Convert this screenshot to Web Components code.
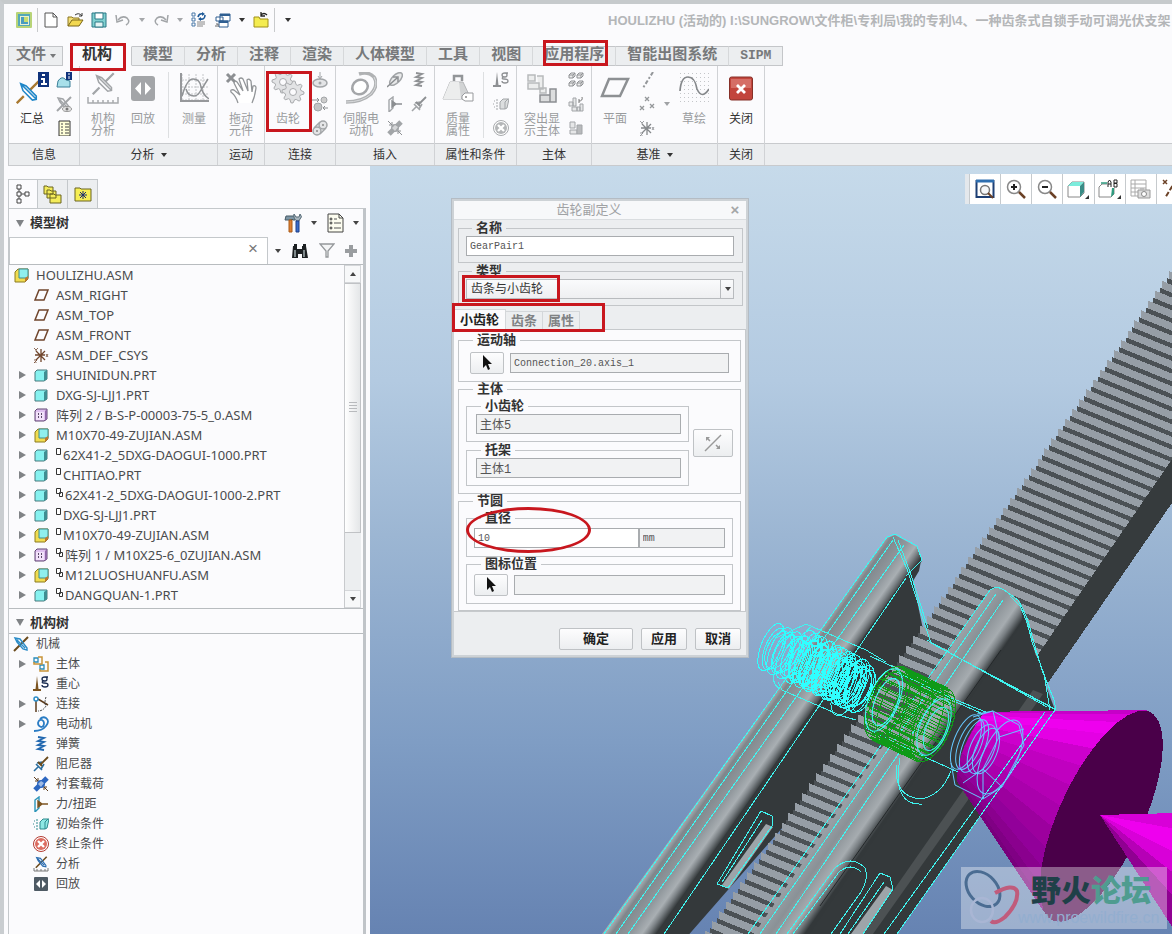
<!DOCTYPE html>
<html lang="zh-CN">
<head>
<meta charset="utf-8">
<title>HOULIZHU</title>
<style>
  html, body { height: 100%; margin: 0; }
  body {
    font: 12px/16px "Liberation Sans", "Noto Sans CJK SC", sans-serif;
    color: #444;
    background: #fbfbfd;
    overflow: hidden;
  }
</style>
</head>
<body>
<cad-window>
  <quick-bar slot="title">HOULIZHU (活动的) I:\SUNGROW\文件柜\专利局\我的专利\4、一种齿条式自锁手动可调光伏支架</quick-bar>

  <ribbon-tabs slot="tabs">
    <ribbon-tab menu>文件</ribbon-tab>
    <ribbon-tab active marked style="--mark: -3px 6px -5px 7px">机构</ribbon-tab>
    <ribbon-tab>模型</ribbon-tab>
    <ribbon-tab>分析</ribbon-tab>
    <ribbon-tab>注释</ribbon-tab>
    <ribbon-tab>渲染</ribbon-tab>
    <ribbon-tab>人体模型</ribbon-tab>
    <ribbon-tab>工具</ribbon-tab>
    <ribbon-tab>视图</ribbon-tab>
    <ribbon-tab marked style="--mark: -6px 8px 0 10px">应用程序</ribbon-tab>
    <ribbon-tab>智能出图系统</ribbon-tab>
    <ribbon-tab>SIPM</ribbon-tab>
  </ribbon-tabs>

  <ribbon-bar slot="ribbon">
    <ribbon-group label="信息">
      <ribbon-button icon="summary">汇总</ribbon-button>
      <icon-column icons="massinfo hidejoint list"></icon-column>
    </ribbon-group>
    <ribbon-group label="分析" menu>
      <ribbon-button icon="mechanalysis" off>机构<br>分析</ribbon-button>
      <ribbon-button icon="playback" off>回放</ribbon-button>
      <ribbon-sep></ribbon-sep>
      <ribbon-button icon="measure" off>测量</ribbon-button>
    </ribbon-group>
    <ribbon-group label="运动">
      <ribbon-button icon="drag" off>拖动<br>元件</ribbon-button>
    </ribbon-group>
    <ribbon-group label="连接">
      <ribbon-button icon="gears" off marked>齿轮</ribbon-button>
      <icon-column icons="cam contact belt"></icon-column>
    </ribbon-group>
    <ribbon-group label="插入">
      <ribbon-button icon="motor" off wide>伺服电<br>动机</ribbon-button>
      <icon-column icons="forcemotor forceg bushingg"></icon-column>
      <icon-column icons="springg damperg"></icon-column>
    </ribbon-group>
    <ribbon-group label="属性和条件">
      <ribbon-button icon="mass" off>质量<br>属性</ribbon-button>
      <ribbon-sep></ribbon-sep>
      <icon-column icons="gravityg initialg stopg"></icon-column>
    </ribbon-group>
    <ribbon-group label="主体">
      <ribbon-button icon="bodies" off wide>突出显<br>示主体</ribbon-button>
      <icon-column icons="cubes rebody shade"></icon-column>
    </ribbon-group>
    <ribbon-group label="基准" menu>
      <ribbon-button icon="plane" off>平面</ribbon-button>
      <icon-column icons="axis points csysg"></icon-column>
      <ribbon-caret></ribbon-caret>
      <ribbon-button icon="sketch" off>草绘</ribbon-button>
    </ribbon-group>
    <ribbon-group label="关闭">
      <ribbon-button icon="close">关闭</ribbon-button>
    </ribbon-group>
  </ribbon-bar>

  <side-panel slot="side">
    <tree-view slot="model" label="模型树" style="--tree-size: 13px">
      <tree-item root icon="asm">HOULIZHU.ASM</tree-item>
      <tree-item icon="planei">ASM_RIGHT</tree-item>
      <tree-item icon="planei">ASM_TOP</tree-item>
      <tree-item icon="planei">ASM_FRONT</tree-item>
      <tree-item icon="csys">ASM_DEF_CSYS</tree-item>
      <tree-item open icon="part">SHUINIDUN.PRT</tree-item>
      <tree-item open icon="part">DXG-SJ-LJJ1.PRT</tree-item>
      <tree-item open icon="pattern">阵列 2 / B-S-P-00003-75-5_0.ASM</tree-item>
      <tree-item open icon="asm">M10X70-49-ZUJIAN.ASM</tree-item>
      <tree-item open icon="part" flag="one">62X41-2_5DXG-DAOGUI-1000.PRT</tree-item>
      <tree-item open icon="part" flag="one">CHITIAO.PRT</tree-item>
      <tree-item open icon="part" flag="two">62X41-2_5DXG-DAOGUI-1000-2.PRT</tree-item>
      <tree-item open icon="part" flag="one">DXG-SJ-LJJ1.PRT</tree-item>
      <tree-item open icon="asm" flag="one">M10X70-49-ZUJIAN.ASM</tree-item>
      <tree-item open icon="pattern" flag="two">阵列 1 / M10X25-6_0ZUJIAN.ASM</tree-item>
      <tree-item open icon="asm" flag="two">M12LUOSHUANFU.ASM</tree-item>
      <tree-item open icon="part" flag="two">DANGQUAN-1.PRT</tree-item>
    </tree-view>
    <tree-view slot="mechanism" label="机构树">
      <tree-item root icon="mech">机械</tree-item>
      <tree-item open icon="body">主体</tree-item>
      <tree-item icon="gravity">重心</tree-item>
      <tree-item open icon="joint">连接</tree-item>
      <tree-item open icon="motori">电动机</tree-item>
      <tree-item icon="spring">弹簧</tree-item>
      <tree-item icon="damper">阻尼器</tree-item>
      <tree-item icon="bushing">衬套载荷</tree-item>
      <tree-item icon="force">力/扭距</tree-item>
      <tree-item icon="initial">初始条件</tree-item>
      <tree-item icon="stop">终止条件</tree-item>
      <tree-item icon="analysisi">分析</tree-item>
      <tree-item icon="playi">回放</tree-item>
    </tree-view>
  </side-panel>

  <graphics-area slot="main">
    <view-toolbar slot="toolbar"></view-toolbar>
    <gear-dialog slot="dialog"></gear-dialog>
    <forum-stamp slot="stamp"></forum-stamp>
  </graphics-area>
</cad-window>

<script>
// ---------- icons: name -> [width, height, svg markup] ----------
const G = '#a2a5a8';

const crossBar = (c1, c2) => `<path d="M1 31L10 22M18 14L29 3" stroke="${c1}" stroke-width="3"/><path d="M6 6l20 20M6 6l3 9 12 12 5-1 0-4L13 9z" fill="none" stroke="${c2}" stroke-width="2"/>`;
const miniCross = (c1, c2) => `<path d="M1 15L15 1" stroke="${c1}" stroke-width="2"/><path d="M2 2l5 1 7 9 0 2-4-1-6-7zM4 4l8 8" fill="none" stroke="${c2}" stroke-width="1.4"/>`;
const spring = c => `<path d="M5 1l6 1-6 3 6 1-6 3 6 1-6 3 6 1" fill="none" stroke="${c}" stroke-width="1.8"/>`;
const damper = (a, b) => `<path d="M1 15l4-4M3 8l6 6M4 7l5-1M8 13l3-5" stroke="${a}" stroke-width="1.6" fill="none"/><path d="M7 9l8-8M5 6l4 4" stroke="${b}" stroke-width="1.8"/>`;
const bushing = (a, b) => `<path d="M2 14L14 2" stroke="${a}" stroke-width="5"/><circle cx="8" cy="8" r="4" fill="${a}"/><path d="M5 8l3-3 3 2-3 4z" fill="#fff" opacity=".55"/><path d="M1 1l4 4M2 5h3V2M15 15l-4-4M11 14v-3h3" stroke="${b}" fill="none"/>`;
const force = (a, b) => `<path d="M2 4l4-3v11l-4 4z" fill="none" stroke="${a}" stroke-width="1.4"/><path d="M5 8h10M5 5l4 3-4 3z" stroke="${b}" stroke-width="1.4" fill="${b}"/>`;
const initial = (a, f) => `<path d="M7 6l3-3h6l-2 9-2 1H7z" fill="${f}" stroke="${a}"/><path d="M12 6v7M12 6l3-3" stroke="${a}"/><path d="M1 5h1M3 4h2M0 8h1M3 7h2M1 11h1M3 10h2M3 13h2" stroke="${a}"/>`;
const stop = (a, b) => `<circle cx="8" cy="8" r="7.5" fill="#fff" stroke="${a}"/><circle cx="8" cy="8" r="6" fill="${b}"/><path d="M5 5l6 6M11 5l-6 6" stroke="#fff" stroke-width="2.4"/>`;
const gravity = (a, b) => `<path d="M4 0l1.5 13h-3z" fill="${a}"/><path d="M0 14h8" stroke="${a}" stroke-width="2"/><path d="M15 1h-3M12 1q-3 0-3 2t3 2q2 0 2-2t-2-2M10 5q-2 2 1 2 4 0 4 2t-3 2q-3 0-3-2" fill="none" stroke="${b}" stroke-width="1.3"/>`;
const bodies = (a, b) => `<path d="M1 2h4v4H1zM7 9h4v4H7z" fill="none" stroke="${b}" stroke-width="1.3"/><path d="M5 1h4v7H1V6M12 6h3v9H7v-2" fill="none" stroke="${a}" stroke-width="1.5"/>`;
const swirl = (c, w) => `<path d="M1 15q8 0 12-5 4-5 0-8Q10 0 7 3M11 7q0 4-3 4-3-1-3-4 1-4 4-3 2 1 2 3z" fill="none" stroke="${c}" stroke-width="${w}"/>`;
const csys = c => `<path d="M8 2v13M2 8h10M3 4l9 9M3 13l9-9" stroke="${c}" stroke-width="1.3"/><path d="M1 1l2 2 2-2M3 3v1M13 7l2 3M15 7l-2 3M1 13h3l-3 3h3" stroke="${c}" stroke-width=".8" fill="none"/>`;

const gear = (cx, cy, r) => {
  let d = '';
  for (let i = 0; i < 32; i++) {
    const rr = i % 4 < 2 ? r : r - 3;
    const a = i * Math.PI / 16;
    d += `${i ? 'L' : 'M'}${(cx + rr * Math.cos(a)).toFixed(1)} ${(cy + rr * Math.sin(a)).toFixed(1)}`;
  }
  return `<path d="${d}z" fill="#e2e3e5" stroke="#a9abae"/><circle cx="${cx}" cy="${cy}" r="3.5" fill="#fbfbfd" stroke="#a9abae"/>`;
};
const grid = (n, s) => Array.from({ length: n * n }, (_, i) => `<rect x="${(i % n) * s + 1}" y="${Math.floor(i / n) * s + 1}" width="1" height="1" fill="#c4c6c9"/>`).join('');

const ICONS = {
  // quick access
  app: [16, 16, `<rect width="16" height="16" rx="1" fill="#b8d478"/><path d="M2 2h12v12H2z" fill="#55a8b8"/><path d="M4 4h9v9H4z" fill="#e8f0d0"/><path d="M5 5h7v7H5z" fill="#4a9cc0"/><path d="M8 5h4v5H8z" fill="#c8de70"/>`],
  new: [14, 16, `<path d="M1 1h8l4 4v10H1z" fill="#fff" stroke="#555"/><path d="M9 1v4h4" fill="none" stroke="#555"/>`],
  open: [17, 16, `<path d="M1 14V5h4l1 1h6v3" fill="#f4e078" stroke="#8a7420"/><path d="M1 14l4-6h11l-4 6z" fill="#f2d850" stroke="#7a6618"/><path d="M8 3q4-3 7 1M15 1v3h-3" fill="none" stroke="#333"/>`],
  save: [16, 16, `<path d="M1 1h14v14H1z" fill="#7fd0d0" stroke="#2d7886"/><path d="M4 1h8v6H4z" fill="#fff" stroke="#2d7886"/><path d="M4 10h8v5H4z" fill="#e4f4f4" stroke="#2d7886"/>`],
  undo: [16, 12, `<path d="M3 6q4-5 9-2 4 4-1 7" fill="none" stroke="${G}" stroke-width="1.5"/><path d="M1 1l1 7 6-2" fill="none" stroke="${G}" stroke-width="1.5"/>`],
  redo: [16, 12, `<path d="M13 6Q9 1 4 4q-4 4 1 7" fill="none" stroke="${G}" stroke-width="1.5"/><path d="M15 1l-1 7-6-2" fill="none" stroke="${G}" stroke-width="1.5"/>`],
  regen: [16, 16, `<path d="M1 1h3v3H1zM1 6h3v3H1zM1 11h3v3H1z" fill="none" stroke="#4878a8"/><path d="M6 10h8M6 12h8M6 14h6" stroke="#888"/><path d="M7 5q1-4 5-3M14 3q0 5-5 4" fill="none" stroke="#1e5a98" stroke-width="1.6"/><path d="M11 0l3 2-3 2zM10 5L7 7l3 2z" fill="#1e5a98"/>`],
  windows: [16, 15, `<path d="M5 1h10v7H5zM1 4h7v4H1zM4 8h9v6H4z" fill="#fff" stroke="#2f5f92"/><path d="M5 1h10v2H5zM4 8h9v2H4z" fill="#2f5f92"/><path d="M1 11h2v3M1 12v2" stroke="#666" fill="none"/>`],
  winclose: [16, 16, `<path d="M1 15V5h5l1 2h8v8z" fill="#f4ec50" stroke="#a09018"/><path d="M8 3q3-3 6 0M8 0v4h4" fill="none" stroke="#222" stroke-width="1.3"/>`],

  // ribbon
  summary: [33, 32, `<g transform="translate(0,7) scale(.78)">${crossBar('#a87830', '#1f86c8')}</g><rect x="22" width="11" height="15" fill="#10337c"/><path d="M26 3h3M25 7h3v5M25 12h6" stroke="#fff" stroke-width="2" fill="none"/>`],
  massinfo: [16, 16, `<path d="M1 15l1-6q4-6 8-1l4 1v6z" fill="#a8e0ea" stroke="#3a7f98"/><rect x="10" y="0" width="6" height="8" fill="#10337c"/><path d="M12 2h2M13 4v3" stroke="#fff"/>`],
  hidejoint: [16, 16, `${miniCross(G, G)}<ellipse cx="11" cy="13" rx="4.5" ry="2.5" fill="#e4e4e4" stroke="#999"/><circle cx="11" cy="13" r="1.5" fill="#777"/>`],
  list: [13, 16, `<path d="M1 1h11v15H1z" fill="#ffffd8" stroke="#333"/><path d="M3 4h2M3 7h2M3 10h2M3 13h2M7 4h4M7 7h4M7 10h4M7 13h4" stroke="#444"/>`],
  mechanalysis: [32, 32, `<g transform="translate(5,-1) scale(.75)">${crossBar(G, G)}</g><path d="M1 25v6h30v-6M6 28v3M11 28v3M16 28v3M21 28v3M26 28v3" fill="none" stroke="#a8aaad" stroke-width="1.5"/>`],
  playback: [26, 32, `<rect x="1" y="4" width="24" height="25" rx="3" fill="#a3a5a8"/><path d="M11 10v13l-6-6.500zM15 10v13l6-6.500z" fill="#fff"/>`],
  measure: [30, 32, `<path d="M3 2v26M3 28h27M3 8h27M3 15h27M3 22h27M10 2v26M17 2v26M24 2v26" stroke="#c4c6c9" stroke-dasharray="2 1"/><path d="M3 24Q8 7 14 7q7 0 8 8 2 8 8 12M7 17q2 7 8 7 4 0 7-6l7-11" fill="none" stroke="#909396" stroke-width="1.5"/><path d="M2 1v28h28" fill="none" stroke="#96989b" stroke-width="2"/>`],
  drag: [32, 32, `<path d="M2 2l8 8M10 2l-8 8" stroke="#8c8f92" stroke-width="3"/><path d="M13 31q-2-7-7-11-1-3 3-2l6 5L9 11q1-3 3-1l6 9-4-12q2-2 4 0l5 12-1-11q2-2 4 1l1 11 1-6q3-1 3 2-1 8-4 15" fill="#fff" stroke="#929598" stroke-width="1.3"/>`],
  gears: [34, 32, `${gear(12, 10, 11)}${gear(22, 20, 11)}`],
  cam: [16, 16, `<path d="M8 0v6M6 4l2 3 2-3" stroke="${G}" fill="none"/><ellipse cx="8" cy="11" rx="7" ry="4" fill="#e3e4e6" stroke="${G}" stroke-width="1.5"/><circle cx="8" cy="11" r="1.5" fill="${G}"/>`],
  contact: [16, 16, `<circle cx="12" cy="4" r="3" fill="#ccc" stroke="${G}"/><circle cx="6" cy="11" r="4" fill="#c2c4c6" stroke="${G}"/><path d="M0 4h7M5 2l2 2-2 2M16 12h-5M13 10l-2 2 2 2" stroke="#8c8f92" fill="none"/>`],
  belt: [16, 16, `<circle cx="11" cy="5" r="4" fill="#e4e5e7" stroke="${G}" stroke-width="1.5"/><circle cx="5" cy="11" r="4" fill="#e4e5e7" stroke="${G}" stroke-width="1.5"/><path d="M8 2L2 8M14 8l-6 6" stroke="${G}" stroke-width="1.5"/><circle cx="11" cy="5" r="1" fill="#888"/><circle cx="5" cy="11" r="1" fill="#888"/>`],
  motor: [32, 32, `<path d="M1 30q16 0 25-8 8-9 3-17-6-6-15-3" fill="none" stroke="#b0b2b4" stroke-width="3.500"/><path d="M1 30q16 0 25-8 8-9 3-17" fill="none" stroke="#d8dadc" stroke-width="1"/><ellipse cx="15" cy="15" rx="8" ry="7" transform="rotate(-30 15 15)" fill="#fff" stroke="#a4a6a9" stroke-width="2.500"/>`],
  forcemotor: [16, 16, `<ellipse cx="9" cy="7" rx="8" ry="4" transform="rotate(-45 9 7)" fill="#e8e9ea" stroke="${G}" stroke-width="1.5"/><path d="M0 15L10 6M6 5h5v5" stroke="#8c8f92" fill="none" stroke-width="1.5"/>`],
  springg: [16, 16, spring('#8f9194')],
  forceg: [16, 16, force(G, '#8c8f92')],
  damperg: [16, 16, damper(G, '#8c8f92')],
  bushingg: [16, 16, bushing(G, '#8c8f92')],
  mass: [32, 32, `<path d="M1 27l7-17h13l8 17z" fill="#d2d4d5" stroke="#b4b6b8"/><path d="M8 10l-7 17h18l-2-17z" fill="#eceded"/><path d="M12 9V4h8v5" fill="none" stroke="#929598" stroke-width="2.5"/><path d="M20 24l3-3h8v8h-8l-3-2z" fill="#fff" stroke="#97999c"/><circle cx="24" cy="25" r="1" fill="#888"/>`],
  gravityg: [16, 16, gravity('#8f9194', '#8f9194')],
  initialg: [16, 16, initial(G, '#dcdedf')],
  stopg: [17, 17, stop('#a8aaad', '#b4b6b8')],
  bodies: [30, 32, `<path d="M1 3h7v6H1zM1 11h11v6H1zM10 4h6v13h-4M13 16h6v5h-6z" fill="#eceded" stroke="#b8babc" stroke-width="1.5"/><path d="M13 23h10v7H13zM23 17h6v13h-6z" fill="#dcddde" stroke="#8c8f92" stroke-width="1.5"/>`],
  cubes: [16, 16, [[1, 3], [9, 3], [1, 11], [9, 11]].map(([x, y]) => `<path d="M${x} ${y}l2-2h4v3l-2 2h-4zM${x} ${y}h4v3M${x + 4} ${y}l2-2" fill="#eee" stroke="#8f9194"/>`).join('')],
  rebody: [16, 16, `<path d="M1 6h4v4H1zM5 2h3v8H5zM4 11h5v4H4zM9 11h3v4H9zM12 8h3v7h-3z" fill="#e6e7e8" stroke="${G}"/><path d="M11 5q4 0 3-4M11 3v4" stroke="#777" fill="none"/>`],
  shade: [14, 14, `<path d="M1 1h5v6H1zM1 9h7v4H1z" fill="#e6e7e8" stroke="${G}"/><path d="M8 4h5v9H8z" fill="#b8babc" stroke="${G}"/>`],
  plane: [30, 32, `<path d="M9 7h19l-8 17H2z" fill="#fbfbfd" stroke="#8d9093" stroke-width="2.5"/>`],
  axis: [16, 16, `<path d="M14 0L4 16" stroke="#94979a" stroke-width="2" stroke-dasharray="4 2 2 2"/>`],
  points: [16, 16, `<path d="M6 1l4 4M10 1L6 5M1 10l4 4M5 10l-4 4M11 8l4 4M15 8l-4 4" stroke="#94979a" stroke-width="1.3"/>`],
  csysg: [16, 16, csys('#85888b')],
  sketch: [30, 32, `${grid(8, 4)}<path d="M1 19Q2 5 9 5t9 12q5 11 12 0" fill="none" stroke="#85888b" stroke-width="1.7"/>`],
  close: [24, 32, `<rect y="5" x=".5" width="23" height="23" rx="2" fill="#c2453c" stroke="#863028"/><path d="M2 7h20v9H2z" fill="#dd8078" opacity=".7"/><path d="M8 13l8 8M16 13l-8 8" stroke="#fff" stroke-width="2.8"/>`],

  // side panel
  treetab: [14, 20, `<path d="M1 1h4v4H1zM1 8h4v4H1zM1 15h4v4H1zM9 8h4v4H9zM3 5v3M3 12v3M5 10h4" fill="none" stroke="#444"/>`],
  folders: [19, 20, `<path d="M1 10V2h3l1 1h5v7zM4 14V6h3l1 1h5v7zM7 19V10h4l1 1h6v8z" fill="#f4ec5a" stroke="#6b6420"/>`],
  favorites: [18, 16, `<path d="M1 15V2h5l1 1h10v12z" fill="#f6ee54" stroke="#6b6420"/><path d="M9 5v8M5 9h8M6 6l6 6M12 6l-6 6" stroke="#1d2f6e"/>`],
  tools: [18, 20, `<path d="M1 7l1-4h9v4H9l-1-1-1 1z" fill="#7d95a4" stroke="#465a66"/><path d="M5 7h3v12H5z" fill="#e08030" stroke="#a85a18"/><path d="M10 1l2 3h3l1-3q3 3 0 5l-1 2h-2q-4-2-3-7z" fill="#a6b4bd" stroke="#566a76"/><path d="M12 8h3v11h-3z" fill="#3a6cc8" stroke="#1f3f88"/>`],
  settings: [17, 20, `<path d="M1 1h11l4 4v14H1z" fill="#fdfdf0" stroke="#444"/><path d="M12 1v4h4" fill="none" stroke="#444"/><circle cx="4" cy="6" r="1" fill="none" stroke="#333"/><circle cx="4" cy="10" r="1" fill="none" stroke="#333"/><circle cx="4" cy="15" r="1" fill="none" stroke="#333"/><path d="M7 6h3M7 10h7M7 15h7" stroke="#555"/>`],
  find: [18, 16, `<path d="M2 3h4v3h5V3h4l2 12h-6v-4H7v4H1z" fill="#1c2022"/><path d="M3 1h3v2H3zM12 1h3v2h-3z" fill="#1c2022"/><path d="M4 7v7M13 7v7" stroke="#b4c0c4" stroke-width="1.3"/>`],
  filter: [16, 15, `<path d="M1 1h14L9 8v6H7V8z" fill="#f4f5f6" stroke="#95989b" stroke-width="1.3"/>`],
  plus: [12, 12, `<path d="M6 0v12M0 6h12" stroke="#9a9da0" stroke-width="4"/>`],
  asm: [15, 15, `<path d="M1 4l3-3h10v10l-3 3H1z" fill="#f0dc50" stroke="#8c7c20"/><path d="M5 1h9v9H5z" fill="#8ff0ee" stroke="#3e8c8e"/><path d="M11 14V10l3-2v3z" fill="#c07830"/>`],
  planei: [15, 12, `<path d="M5 1h9l-4 10H1z" fill="#fbfbfd" stroke="#70452c" stroke-width="1.5"/>`],
  csys: [16, 16, csys('#70452c')],
  part: [14, 13, `<path d="M1 3l2-2h10v9l-3 2H1z" fill="#86f2f0" stroke="#48787c"/><path d="M10 12V3l3-2v9z" fill="#3e8e92"/>`],
  pattern: [14, 14, `<path d="M1 3l2-2h10v10l-3 2H1z" fill="#dfc0f0" stroke="#5e4470"/><path d="M11 3v10l2-2V1z" fill="#9068a8"/><path d="M2 4h8v8H2z" fill="#f2e2fa"/><path d="M4 6h1M7 6h1M4 9h1M7 9h1" stroke="#2c1c3c" stroke-width="1.5"/>`],
  one: [6, 8, `<path d="M.5.5h4v6h-4z" fill="#fff" stroke="#333"/>`],
  two: [8, 10, `<path d="M.5.5h4v5h-4zM3.500 4.500h3v4h-3z" fill="#fff" stroke="#333"/>`],
  mech: [16, 16, miniCross('#6a4a1c', '#2a8cc8')],
  body: [16, 16, bodies('#c89438', '#2a8cb8')],
  gravity: [16, 16, gravity('#7c5420', '#1a2c50')],
  joint: [16, 16, `<path d="M3 5v11M5 3l10 6" stroke="#5c3c1c" stroke-width="1.5"/><circle cx="3" cy="3" r="2" fill="#fff" stroke="#2a8cc8" stroke-width="1.5"/><path d="M13 1q-2 6 0 9-3 5-8 5" fill="none" stroke="#444" stroke-dasharray="2 1"/>`],
  motori: [16, 16, swirl('#2a7cc4', 1.8)],
  spring: [16, 16, spring('#2268b0')],
  damper: [16, 16, damper('#2a6ea0', '#6a4a1c')],
  bushing: [16, 16, bushing('#2c66c0', '#5c3c1c')],
  force: [16, 16, force('#2a94b8', '#7c5420')],
  initial: [16, 16, initial('#2f8a8e', '#8ee8e4')],
  stop: [17, 17, stop('#b23a30', '#dc6c60')],
  analysisi: [16, 16, `<g transform="translate(2,0) scale(.78)">${miniCross('#6a4a1c', '#2a6cb0')}</g><path d="M1 12v3h14v-3M4 13v2M8 13v2M12 13v2" fill="none" stroke="#777"/>`],
  playi: [14, 14, `<rect width="14" height="14" rx="1" fill="#4e5a64"/><path d="M6 3v8L2 7zM8 3v8l4-4z" fill="#fff"/>`],

  // view toolbar
  refit: [20, 20, `<path d="M1.500 2h17v16h-17z" fill="#fff" stroke="#1d3f74" stroke-width="2"/><path d="M1 2h18" stroke="#2f6fb0" stroke-width="3"/><circle cx="10" cy="11" r="4.5" fill="#f6f8fa" stroke="#777" stroke-width="1.5"/><path d="M13 14l5 5" stroke="#6b4126" stroke-width="2"/>`],
  zoomin: [20, 20, `<circle cx="8" cy="8" r="6.5" fill="#fff" stroke="#888" stroke-width="1.5"/><path d="M5 8h6M8 5v6" stroke="#222" stroke-width="2"/><path d="M13 13l6 6" stroke="#6b4126" stroke-width="2.5"/>`],
  zoomout: [20, 20, `<circle cx="8" cy="8" r="6.5" fill="#fff" stroke="#888" stroke-width="1.5"/><path d="M5 8h6" stroke="#222" stroke-width="2"/><path d="M13 13l6 6" stroke="#6b4126" stroke-width="2.5"/>`],
  shading: [22, 20, `<path d="M1 7l4-4h12v11l-4 4H1z" fill="#fff" stroke="#888"/><path d="M1 7l4-4h12l-4 4z" fill="#7cecdc"/><path d="M13 7l4-4v10l-4 5z" fill="#3a8c86"/><path d="M22 16v4h-4z" fill="#333"/>`],
  views: [24, 20, `<path d="M1 18V8l3-3h5M1 18h12l3-3V9" fill="none" stroke="#888"/><path d="M3 4h6" stroke="#2f9c80" stroke-width="1.5"/><path d="M13 18l3-3V9h-2z" fill="#2f9c80"/><path d="M10 8V3l1.500-2L13 3v5M10 5h3M16 1v7M16 1h3v3h-3M16 4.500h3V8h-3" fill="none" stroke="#222"/><path d="M23 16v4h-4z" fill="#333"/>`],
  viewmgr: [21, 20, `<path d="M1 1h15v16H1zM1 5h15M1 9h15M1 13h15M5 1v16" fill="#fff" stroke="#aaa"/><path d="M8 11h12v8H8z" fill="#ddd" stroke="#999"/><circle cx="14" cy="15" r="2.5" fill="#fff" stroke="#888"/><path d="M10 9h4v2h-4z" fill="#bbb"/>`],
  datum: [20, 20, `<path d="M1 1l4 4M5 1L1 5" stroke="#6b4126" stroke-width="1.5"/><path d="M14 1L3 19" stroke="#6b4126" stroke-width="2" stroke-dasharray="5 2"/>`],

  // dialog
  pick: [10, 16, `<path d="M1 0v13l3-3 2 5 2-1-2-5h4z" fill="#111"/>`],
  swap: [18, 18, `<path d="M1 17L17 1" stroke="#999" stroke-width="1.5"/><path d="M2 3h4l-4 4zM16 15h-4l4-4z" fill="#999"/><path d="M3 4l3 3M15 14l-3-3" stroke="#999" stroke-width="1.5"/>`]
};

class UiBase extends HTMLElement {
  constructor() {
    super();
    this.attachShadow({ mode: 'open' });
  }
  connectedCallback() {
    this.shadowRoot.innerHTML = this.render();
  }
}

class UiIcon extends UiBase {
  render() {
    const [w, h, body] = ICONS[this.getAttribute('name')];
    return `<style>:host { display: inline-flex; flex: none; } svg { display: block; }</style>
      <svg width="${w}" height="${h}" viewBox="0 0 ${w} ${h}" aria-hidden="true">${body}</svg>`;
  }
}

class UiCaret extends UiBase {
  render() {
    return `<style>
      :host { display: inline-block; flex: none; width: 0; height: 0;
        border: 3px solid transparent; border-top: 4px solid currentColor; border-bottom: 0; }
    </style>`;
  }
}

// red rectangle or oval laid over its parent's box
class MarkBox extends UiBase {
  render() {
    return `<style>
      :host { position: absolute; inset: var(--mark, 0); border: 3px solid #c8171e; z-index: 5; pointer-events: none; }
      :host([oval]) { border-radius: 50%; }
    </style>`;
  }
}

class CadWindow extends UiBase {
  render() {
    return `<style>
      :host { display: flex; flex-direction: column; height: 100vh; box-sizing: border-box;
        border-top: 4px solid #c6cacc; border-left: 4px solid #c9cdd0; background: #fbfbfd; }
      .top { padding-left: 4px; flex: none; }
      .work { flex: 1; display: flex; min-height: 0; }
      .main { flex: 1; min-width: 0; display: flex; }
    </style>
    <div class="top">
      <slot name="title"></slot>
      <slot name="tabs"></slot>
      <slot name="ribbon"></slot>
    </div>
    <div class="work">
      <slot name="side"></slot>
      <div class="main"><slot name="main"></slot></div>
    </div>`;
  }
}

class QuickBar extends UiBase {
  render() {
    const b = (n, t) => `<button title="${t}"><ui-icon name="${n}"></ui-icon></button>`;
    return `<style>
      :host { display: grid; grid-template-columns: 600px 1fr; height: 42px; overflow: hidden; }
      .icons { display: flex; align-items: center; padding: 0 0 10px 4px; color: #333; }
      button { display: flex; align-items: center; justify-content: center; width: 24px; height: 24px; padding: 0; border: 0; background: none; }
      i { width: 1px; height: 24px; background: #c8cacc; margin: 0 1px; }
      ui-caret { margin: 0 4px; }
      ui-caret.off { color: #a6a8ab; }
      ui-caret.menu { margin-left: 9px; }
      h1 { margin: 0; padding-top: 8px; font-size: 13px; line-height: 18px; font-weight: bold; color: #b4b6b8; white-space: nowrap; }
    </style>
    <div class="icons">
      ${b('app', '窗口')}<i></i>${b('new', '新建')}${b('open', '打开')}${b('save', '保存')}${b('undo', '撤消')}
      <ui-caret class="off"></ui-caret>${b('redo', '重做')}<ui-caret class="off"></ui-caret>
      ${b('regen', '重新生成')}${b('windows', '窗口')}<ui-caret></ui-caret>${b('winclose', '关闭')}<i></i><ui-caret class="menu"></ui-caret>
    </div>
    <h1><slot></slot></h1>`;
  }
}

class RibbonTabs extends UiBase {
  render() {
    return `<style>:host { display: flex; height: 20px; } </style><slot></slot>`;
  }
}

class RibbonTab extends UiBase {
  render() {
    return `<style>
      :host { display: block; position: relative; z-index: 2; }
      button { display: flex; align-items: center; height: 20px; padding: 0 11px; box-sizing: border-box;
        font: bold 15px/18px "Liberation Mono", "Noto Sans CJK SC", monospace; color: #77797b; white-space: nowrap;
        background: #eceef0; border: 0; border-top: 1px solid #c4c6c9; border-bottom: 1px solid #c4c6c9; border-right: 1px solid #d6d8da; }
      slot { display: block; }
      :host([menu]) button { border-left: 1px solid #c4c6c9; border-right-color: #c4c6c9; padding: 0 6px 0 7px; gap: 4px; }
      :host([active]) button { background: #fbfbfd; color: #333; border-color: transparent #c4c6c9 transparent transparent; padding: 0 19px; }
      :host(:last-child) button { font-size: 13px; border-right-color: #c4c6c9; }
    </style>
    <button role="tab"><slot></slot>${this.hasAttribute('menu') ? '<ui-caret></ui-caret>' : ''}</button>
    ${this.hasAttribute('marked') ? '<mark-box></mark-box>' : ''}`;
  }
}

class RibbonBar extends UiBase {
  render() {
    return `<style>
      :host { display: flex; height: 100px; box-sizing: border-box; border: 1px solid #c8cacd; border-width: 0 0 1px 1px; }
      .rest { flex: 1; display: flex; flex-direction: column; justify-content: flex-end; }
      .rest div { height: 21px; background: #ebedef; border-top: 1px solid #c8cacd; }
    </style>
    <slot></slot><div class="rest"><div></div></div>`;
  }
}

class RibbonGroup extends UiBase {
  render() {
    return `<style>
      :host { display: flex; flex-direction: column; border-right: 1px solid #d0d2d5; }
      .body { flex: 1; display: flex; padding: 6px 3px 0; }
      footer { display: flex; align-items: center; justify-content: center; gap: 6px; height: 21px;
        background: #ebedef; border-top: 1px solid #c8cacd; color: #333; }
    </style>
    <div class="body"><slot></slot></div>
    <footer>${this.getAttribute('label')}${this.hasAttribute('menu') ? '<ui-caret></ui-caret>' : ''}</footer>`;
  }
}

class RibbonButton extends UiBase {
  render() {
    return `<style>
      :host { display: block; position: relative; width: 40px; --mark: -1px -4px 11px -2px; }
      :host([wide]) { width: 44px; }
      button { display: flex; flex-direction: column; align-items: center; gap: 9px; width: 100%; padding: 0; border: 0; background: none;
        font: 12px/12px "Liberation Sans", "Noto Sans CJK SC", sans-serif; color: #333; white-space: nowrap; }
      :host([off]) button { color: #999b9d; }
    </style>
    <button><ui-icon name="${this.getAttribute('icon')}"></ui-icon><span><slot></slot></span></button>
    ${this.hasAttribute('marked') ? '<mark-box></mark-box>' : ''}`;
  }
}

class IconColumn extends UiBase {
  render() {
    return `<style>
      :host { display: flex; flex-direction: column; gap: 8px; width: 24px; }
      button { display: flex; align-items: center; justify-content: center; height: 16px; padding: 0; border: 0; background: none; }
    </style>
    ${this.getAttribute('icons').split(' ').map(n => `<button aria-label="${n}"><ui-icon name="${n}"></ui-icon></button>`).join('')}`;
  }
}

class RibbonSep extends UiBase {
  render() {
    return `<style>:host { width: 1px; height: 66px; margin: 0 5px; background: #dddfe1; }</style>`;
  }
}

class RibbonCaret extends UiBase {
  render() {
    return `<style>:host { display: flex; width: 15px; padding-top: 30px; justify-content: center; color: #a0a2a5; }</style><ui-caret></ui-caret>`;
  }
}

class SidePanel extends UiBase {
  render() {
    return `<style>
      :host { display: flex; flex-direction: column; width: 366px; flex: none; box-sizing: border-box; padding: 13px 4px 0 4px; }
      nav { display: flex; flex: none; margin-bottom: -1px; }
      nav button { width: 30px; height: 30px; padding: 0; display: flex; align-items: center; justify-content: center;
        background: #eceef0; border: 1px solid #c4c8cb; border-left-width: 0; }
      nav button:first-child { border-left-width: 1px; background: #fbfbfd; border-bottom-color: #fbfbfd; }
      .box { flex: 1; display: flex; flex-direction: column; min-height: 0; border: 1px solid #c4c8cb; border-right: 3px solid #c0c4c8; border-bottom: 0; }
      header { display: flex; align-items: center; height: 28px; padding: 0 4px 0 7px; box-sizing: border-box; }
      h2 { margin: 0; flex: 1; display: flex; align-items: center; gap: 6px; font-size: 13px; line-height: 18px; color: #333; }
      h2::before { content: ""; border: 4px solid transparent; border-top: 7px solid #808386; border-bottom: 0; }
      header ui-caret { margin: 0 0 0 9px; }
      header ui-caret + ui-icon { margin-left: 10px; }
      .search { display: flex; align-items: center; border-bottom: 1px solid #b8bcbf; }
      .box .field { display: flex; align-items: center; flex: 1; border: 1px solid #c4c8cb; border-width: 1px 1px 0 1px; height: 27px; box-sizing: border-box; background: #fff; }
      input { flex: 1; min-width: 0; height: 22px; border: 0; padding: 0 8px; outline: none; background: none; }
      .field button { border: 0; background: none; padding: 0 9px 4px; font: 17px/18px "Liberation Sans", sans-serif; color: #777; }
      .tools { display: flex; align-items: center; gap: 10px; padding: 0 6px 0 7px; color: #444; }
      .model { display: flex; border-bottom: 1px solid #b8bcbf; height: 344px; box-sizing: border-box; flex: none; }
      .model slot { display: block; flex: 1; }
      .scroll { display: flex; flex-direction: column; width: 16px; border-left: 1px solid #c8cacd; margin-right: 2px; background: #eceef0; }
      .scroll span { height: 16px; display: flex; align-items: center; justify-content: center; border: 1px solid #d4d6d9; border-width: 1px 1px 1px 0; background: #f7f8f9; color: #444; }
      .up ui-caret { transform: rotate(180deg); }
      .thumb { height: 250px; box-sizing: border-box; border: 1px solid #c0c2c5; border-left: 0; background: linear-gradient(90deg, #fff, #e4e6e8);
        display: flex; align-items: center; justify-content: center; }
      .thumb::after { content: ""; width: 8px; height: 12px; background: repeating-linear-gradient(#b8babd 0 1px, transparent 1px 3px); }
      .gap { flex: 1; }
      .mech header { height: 25px; padding-top: 3px; border-bottom: 1px solid #b8bcbf; }
    </style>
    <nav>
      <button aria-label="模型树"><ui-icon name="treetab"></ui-icon></button>
      <button aria-label="文件夹浏览器"><ui-icon name="folders"></ui-icon></button>
      <button aria-label="收藏夹"><ui-icon name="favorites"></ui-icon></button>
    </nav>
    <div class="box">
      <header><h2>模型树</h2><ui-icon name="tools"></ui-icon><ui-caret></ui-caret><ui-icon name="settings"></ui-icon><ui-caret></ui-caret></header>
      <div class="search">
        <div class="field"><input type="text" aria-label="搜索"><button aria-label="清除">×</button></div>
        <div class="tools"><ui-caret></ui-caret><ui-icon name="find"></ui-icon><ui-icon name="filter"></ui-icon><ui-icon name="plus"></ui-icon></div>
      </div>
      <div class="model">
        <slot name="model"></slot>
        <div class="scroll"><span class="up"><ui-caret></ui-caret></span><div class="thumb"></div><div class="gap"></div><span><ui-caret></ui-caret></span></div>
      </div>
      <div class="mech">
        <header><h2>机构树</h2></header>
        <slot name="mechanism"></slot>
      </div>
    </div>`;
  }
}

class TreeView extends UiBase {
  render() {
    this.setAttribute('role', 'tree');
    this.setAttribute('aria-label', this.getAttribute('label'));
    return `<style>:host { display: flex; flex-direction: column; font: var(--tree-size, 12px)/20px "Noto Sans", "Noto Sans CJK SC", sans-serif; color: #4a4c4e; }</style><slot></slot>`;
  }
}

class TreeItem extends UiBase {
  render() {
    this.setAttribute('role', 'treeitem');
    const flag = this.getAttribute('flag');
    return `<style>
      :host { display: flex; align-items: center; height: 20px; white-space: nowrap; padding-left: 8px; }
      :host([root]) { padding-left: 3px; }
      .arrow { flex: none; width: 15px; display: flex; padding: 0; border: 0; background: none; }
      .arrow.on::before { content: ""; margin-left: 2px; border: 4px solid transparent; border-left: 7px solid #808386; border-right: 0; }
      :host([root]) .arrow { display: none; }
      .icon { width: 18px; flex: none; display: flex; justify-content: center; margin-right: 6px; }
      .flag { align-self: flex-start; margin: 3px 1px 0 0; }
    </style>
    <button class="arrow ${this.hasAttribute('open') ? 'on' : ''}" aria-label="展开"></button>
    <span class="icon"><ui-icon name="${this.getAttribute('icon')}"></ui-icon></span>
    ${flag ? `<ui-icon class="flag" name="${flag}"></ui-icon>` : ''}<slot></slot>`;
  }
}

// ---------- 3D scene ----------
const f1 = n => n.toFixed(1);

function rackTeeth() {
  let out = '';
  for (let i = -14; i < 75; i++) {
    const x = 1167 - 6.92 * i;
    const y = 278 + 9.85 * i;
    out += `<path d="M${f1(x + 2)} ${f1(y - 7)}v8l108 44v-8z" fill="#969ea6"/><path d="M${f1(x)} ${f1(y)}v6l2 1 108 44v-6z" fill="#4b5155"/>`;
  }
  return out;
}

const ell = (x, y, rx, ry, rot = 22) => `<ellipse cx="${f1(x)}" cy="${f1(y)}" rx="${rx}" ry="${ry}" transform="rotate(${rot} ${f1(x)} ${f1(y)})"/>`;

function thread() {
  let out = '';
  for (let i = 0; i < 11; i++) {
    out += ell(771 + i * 9, 647 + i * 4.2, 10, 25) + ell(774 + i * 9, 649 + i * 4.2, 9, 22) + ell(778 + i * 8, 650 + i * 3.8, 11, 20, 26);
  }
  // the middle of the bolt is dense
  for (let i = 0; i < 22; i++) {
    out += ell(800 + i * 2.8, 655 + i * 1.5, i % 2 ? 12 : 8, i % 3 ? 27 : 20, 16 + (i % 4) * 4);
  }
  return out;
}

function gearWire() {
  let out = '';
  const c = Math.cos(0.4), s = Math.sin(0.4);
  for (let i = 0; i < 72; i++) {
    const a = i * Math.PI / 36;
    const r = [1.02, 0.96, 0.86][i % 3];
    const u = 18 * r * Math.cos(a), v = 39 * r * Math.sin(a);
    const x = 887 + u * c - v * s, y = 703 + u * s + v * c;
    out += `<path d="M${f1(x)} ${f1(y)}l46 22"/>`;
  }
  for (let k = 0; k < 5; k++) out += ell(887 + k * 11.5, 703 + k * 5.5, 18, 39, 23);
  return out + ell(887, 703, 15, 34, 23) + ell(933, 725, 15, 34, 23);
}

// wedges of a cone from its apex to points along the near side of the base ellipse
function cone(ax, ay, cx, cy, rx, ry, rot, from, to, shades) {
  const t = rot * Math.PI / 180;
  const n = shades.length;
  const p = a => {
    const u = rx * Math.cos(a), v = ry * Math.sin(a);
    return `${f1(cx + u * Math.cos(t) - v * Math.sin(t))} ${f1(cy + u * Math.sin(t) + v * Math.cos(t))}`;
  };
  return shades.map((fill, i) => {
    const a = from + (to - from) * i / n, b = from + (to - from) * (i + 1) / n;
    return `<path d="M${ax} ${ay}L${p(a)} ${p(b)}z" fill="${fill}" stroke="${fill}"/>`;
  }).join('');
}

class GraphicsArea extends UiBase {
  render() {
    return `<style>
      :host { position: relative; flex: 1; display: flex; align-items: flex-start; overflow: hidden;
        background: linear-gradient(#c6daea 0%, #b3cae1 28%, #9cb6d3 48%, #7f9dc4 75%, #6683b2 100%); }
      svg { position: absolute; inset: 0; width: 100%; height: 100%; }
      .dialog { position: absolute; left: 81px; top: 32px; }
      .tools { position: absolute; right: 0; top: 8px; width: 207px; overflow: hidden; }
      .stamp { position: absolute; right: 5px; bottom: 5px; }
    </style>
    <svg viewBox="370 166 802 768" preserveAspectRatio="xMaxYMax slice" aria-hidden="true">
      <defs>
        <linearGradient id="rail" gradientUnits="userSpaceOnUse" x1="740" y1="743" x2="774" y2="767">
          <stop offset="0" stop-color="#a4abb0"/><stop offset=".12" stop-color="#7f868b"/><stop offset=".5" stop-color="#91989d"/>
          <stop offset=".72" stop-color="#a9afb3"/><stop offset=".84" stop-color="#7c8286"/><stop offset="1" stop-color="#34393b"/>
        </linearGradient>
        <linearGradient id="rail2" gradientUnits="userSpaceOnUse" x1="870" y1="763" x2="906" y2="788">
          <stop offset="0" stop-color="#9aa2a8"/><stop offset=".35" stop-color="#8a9196"/><stop offset=".7" stop-color="#a6acb0"/>
          <stop offset=".84" stop-color="#787e82"/><stop offset="1" stop-color="#33383a"/>
        </linearGradient>
        <clipPath id="cone"><path d="M985 711l200-8v240H1030L957 783q-2-30 28-72z"/></clipPath>
      </defs>
      <!-- back rail -->
      <path d="M906 568l15-7-2 10-6 10 12 58-30 60-210 240H640z" fill="#34393b"/>
      <path d="M887 538l8-3 22 12 5 14-16 15L656 934h-54z" fill="url(#rail)"/>
      <!-- rack -->
      <g shape-rendering="crispEdges">
        ${rackTeeth()}
        <path d="M1267 321L1026 672 1000 740 1050 680 1172 503 1275 355z" fill="#363b3d"/>
      </g>
      <!-- front rail -->
      <path d="M1020 600l20 70 15 40-158 224H780L1000 610z" fill="#34393b"/>
      <path d="M990 590l8-3 22 14 3 22L810 934h-56z" fill="url(#rail2)"/>
      <path d="M1033 690l-170 244h10l170-240z" fill="#4c5153"/>
      <path d="M1001 650L820 906" stroke="#24282a"/>
      <!-- slots -->
      <path d="M766 824l7 3-44 62-7-4zM886 886l7 4-30 44h-12z" fill="#9da4a9"/>
      <!-- cones -->
      <g shape-rendering="crispEdges">
        <ellipse cx="1101" cy="816" rx="42" ry="115" transform="rotate(25 1101 816)" fill="#4a0049"/>
        <g clip-path="url(#cone)">${cone(912, 713, 1101, 816, 42, 115, 25, Math.PI * 1.48, Math.PI * 0.6, ['#b800b8', '#c600c8', '#dc00dc', '#ee00ee', '#e400e4', '#cc00cc', '#c000c0', '#b400b4', '#aa00ac', '#9c009e', '#92009a', '#8a008e', '#800084', '#78007c'])}</g>
        <path d="M1100 815l76-2v118z" fill="#d800d8"/>
        <path d="M1100 815l76 14v24z" fill="#ee00ee"/><path d="M1100 815l76 60v24z" fill="#b600b6"/><path d="M1100 815l76 84v34z" fill="#900092"/>
      </g>
      <!-- highlighted wireframe -->
      <g fill="none" stroke="#3ff5f0" shape-rendering="crispEdges">
        <path d="M887 537L604 934M893 540L616 934M904 545L628 934M906 578L664 934M887 537l8-3 22 12 5 14-16 16M893 537l14 32 18 56 6 18 124 66M898 540l12 32 18 56M990 590L748 934M996 594L760 934M1003 600L776 934M990 590q6-5 14 0l14 10q10 16 14 36l10 34 12 30 2 10M1010 596l10 10q8 16 12 36l12 32 6 36M1055 710L897 934M1045 712L884 934M931 643l125 67M927 640l120 67"/>
        <path d="M897 765q-4 30 22 34 22-2 32-28M900 758q-8 48 22 46M787 934l48-66q16-14 30 0 4 10-4 24l-30 42M793 934l46-62q12-10 22 0"/>
        <path d="M717 884l44-73 11 5 0 10-44 62zM722 882l40-62M880 873l10 4 3 12-30 45M880 873l-40 61M884 882l-36 52"/>
        <path d="M776 638l30-14 60 26 20 12M778 682l4 8 60 26 14 4M812 626q-12 8-14 30M870 656l30 14M866 728l16 8M775 670q-4 14 4 18"/>
        <g stroke="#2fffff">${thread()}</g>
        ${ell(846, 690, 12, 27)}${ell(884, 700, 15, 33)}${ell(886, 702, 11, 25)}
        <path d="M894 671l50 24 44 18M872 730l46 24 40 18M947 698l36 16M952 700l-2 8"/>
      </g>
      <g fill="none" stroke="#0f9a18" shape-rendering="crispEdges">${gearWire()}</g>
      <g fill="none" stroke="#3ff5f0">${ell(884, 700, 15, 33)}${ell(886, 702, 11, 25)}${ell(934, 727, 14, 30)}${ell(936, 729, 10, 23)}</g>
      <g fill="none" stroke="#66c8ff">
        ${ell(966, 742, 12, 29)}${ell(970, 744, 11, 27)}${ell(974, 746, 11, 28)}${ell(982, 749, 12, 26)}${ell(986, 751, 11, 24)}
        <path d="M977 714l16-3 26 14 5 20-22 42-19 12-28-14-4-22M993 711l6 26-16 32 0 30M999 737l25-8M983 769l-20 14M983 769l19 18M993 711l-20 6"/>
        ${ell(1000, 757, 17, 40, 25)}
      </g>
    </svg>
    <div class="tools"><slot name="toolbar"></slot></div>
    <div class="dialog"><slot name="dialog"></slot></div>
    <div class="stamp"><slot name="stamp"></slot></div>`;
  }
}

class ViewToolbar extends UiBase {
  render() {
    const names = ['refit', 'zoomin', 'zoomout', 'shading', 'views', 'viewmgr', 'datum'];
    return `<style>
      :host { display: flex; box-sizing: border-box; width: 222px; height: 30px; background: #fff; border-left: 4px solid #e4e8ec; }
      button { flex: 1; display: flex; align-items: center; justify-content: center; padding: 0; border: 0; border-left: 1px solid #c6cacd; background: #fff; }
    </style>
    ${names.map(n => `<button aria-label="${n}"><ui-icon name="${n}"></ui-icon></button>`).join('')}`;
  }
}

class ForumStamp extends UiBase {
  render() {
    return `<style>
      :host { display: flex; box-sizing: border-box; width: 206px; height: 62px; background: rgba(255, 255, 255, .36); }
      svg { flex: none; margin-right: -2px; }
      .name { padding-left: 13px; font: 900 30px/42px "Noto Sans CJK SC", sans-serif; white-space: nowrap; color: #4f9c90; }
      .name b { color: #1f4048; }
      .url { display: block; font: 16px/18px "Liberation Sans", sans-serif; color: #93aed0; }
    </style>
    <svg width="59" height="62" viewBox="0 0 59 62" fill="none" aria-hidden="true">
      <ellipse cx="22" cy="22" rx="14" ry="20" transform="rotate(-42 22 22)" stroke="#4a6c92" stroke-width="3"/>
      <ellipse cx="21" cy="43" rx="11" ry="12" stroke="#a9b6d4" stroke-width="2.5"/>
      <path d="M34 26q18-10 22-2 2 12-12 26-10 8-14 4" stroke="#c05c7c" stroke-width="4"/>
    </svg>
    <div><div class="name"><b>野火</b>论坛</div><a class="url" href="#">www.proewildfire.cn</a></div>
    <style>a { text-decoration: none; }</style>`;
  }
}

// ---------- dialog ----------
class FieldGroup extends UiBase {
  render() {
    return `<style>
      :host { display: block; }
      fieldset { margin: 0; min-width: 0; border: 1px solid #c3c6c9; padding: var(--pad, 1px 8px 6px 7px); }
      legend { margin-left: var(--indent, 6px); padding: 0 4px; font-size: 13px; line-height: 14px; height: 14px; font-weight: bold; color: #333; }
    </style>
    <fieldset><legend>${this.getAttribute('label')}</legend><slot></slot></fieldset>`;
  }
}

class TextField extends UiBase {
  render() {
    const ro = this.hasAttribute('readonly');
    return `<style>
      :host { display: block; flex: 1; min-width: 0; }
      input { display: block; width: 100%; height: 20px; box-sizing: border-box; margin: 0; padding: 0 3px; border: 1px solid #a9acaf;
        background: #fff; color: #555; font: 10px/18px "Liberation Mono", "Noto Sans CJK SC", monospace; outline: none; }
      input.cjk { font-size: 12px; }
      input[readonly] { background: #f1f2f3; }
    </style>
    <input type="text" class="${this.hasAttribute('cjk') ? 'cjk' : ''}" aria-label="${this.getAttribute('label')}" value="${this.getAttribute('value') || ''}" ${ro ? 'readonly' : ''}>`;
  }
}

class PushButton extends UiBase {
  render() {
    return `<style>
      :host { display: block; flex: none; }
      button { display: flex; align-items: center; justify-content: center; width: 100%; height: 100%; box-sizing: border-box; padding: 0;
        border: 1px solid #bfc2c5; border-radius: 2px; background: linear-gradient(#fdfdfe, #eceef0);
        font: bold 13px/18px "Liberation Sans", "Noto Sans CJK SC", sans-serif; color: #222; }
    </style>
    <button ${this.hasAttribute('label') ? `aria-label="${this.getAttribute('label')}"` : ''}><slot></slot></button>`;
  }
}

class GearDialog extends UiBase {
  render() {
    return `<style>
      :host { display: block; box-sizing: border-box; width: 298px; border: 3px solid #cdd2d6; background: #eceef0; outline: 1px solid #b4bcc4; outline-offset: -1px; }
      header { display: flex; align-items: center; height: 18px; background: #f7f8fa; border-bottom: 1px solid #dadde0; }
      h2 { flex: 1; margin: 0; text-align: center; font-size: 13px; line-height: 16px; font-weight: normal; color: #a0a2a4; }
      header button { border: 0; background: none; padding: 0; width: 22px; font: bold 15px/16px "Liberation Sans", sans-serif; color: #a4a6a8; }
      .head { padding: 1px 3px 0 4px; display: flex; flex-direction: column; gap: 1px; }
      .wrap { position: relative; }
      select { display: block; width: 100%; height: 20px; appearance: none; border: 1px solid #b8bbbe; border-radius: 0; padding: 0 4px; margin: 0;
        font: 12px/18px "Liberation Sans", "Noto Sans CJK SC", sans-serif; color: #333;
        background: linear-gradient(#fafbfc, #eeeff1); }
      .drop { position: absolute; right: 0; top: 0; width: 14px; height: 20px; box-sizing: border-box; border-left: 1px solid #b8bbbe;
        display: flex; align-items: center; justify-content: center; color: #444; pointer-events: none; }
      .wrap mark-box { --mark: -4px 174px -3px -4px; }
      .tabs { position: relative; display: flex; align-items: flex-end; height: 20px; margin-top: 3px; }
      .tabs button { height: 18px; padding: 0 5px; border: 1px solid #d4d7da; border-width: 1px 1px 0 0; background: #eceef0;
        font: bold 13px/16px "Liberation Sans", "Noto Sans CJK SC", sans-serif; color: #808284; }
      .tabs button[aria-selected] { height: 20px; padding: 0 6px; background: #fbfbfd; color: #222; }
      .tabs mark-box { --mark: -6px 141px -3px -2px; }
      .page { background: #fbfbfd; border: 1px solid #c6c9cc; border-left: 0; padding: 3px 4px 0 4px; display: flex; flex-direction: column; }
      .row { display: flex; align-items: center; gap: 6px; }
      .pick { width: 34px; height: 22px; }
      .motion { --pad: 5px 11px 7px; --indent: 3px; }
      .body { --pad: 3px 7px 7px; --indent: 7px; }
      .body .col { flex: 1; display: flex; flex-direction: column; gap: 1px; --pad: 1px 7px 7px 9px; --indent: 5px; }
      .body .row { gap: 4px; }
      .swap { width: 40px; height: 28px; }
      .pitch { --pad: 3px 7px 6px; --indent: 7px; }
      .dia { --pad: 3px 7px 8px; }
      .loc { --pad: 3px 7px 7px; }
      .dia .row { gap: 0; position: relative; }
      .dia text-field:first-child { flex: 164; }
      .dia text-field:nth-child(2) { flex: 86; }
      .dia mark-box { --mark: -21px 134px -5px -8px; }
      footer { display: flex; justify-content: flex-end; gap: 8px; padding: 16px 5px 5px; }
      footer push-button { width: 46px; height: 22px; }
      footer .ok { width: 74px; }
    </style>
    <header><h2>齿轮副定义</h2><button aria-label="关闭">×</button></header>
    <div class="head">
      <field-group label="名称"><text-field label="名称" value="GearPair1"></text-field></field-group>
      <field-group label="类型">
        <div class="wrap">
          <select aria-label="类型"><option>齿条与小齿轮</option></select>
          <span class="drop"><ui-caret></ui-caret></span>
          <mark-box></mark-box>
        </div>
      </field-group>
    </div>
    <div class="tabs" role="tablist">
      <button role="tab" aria-selected="true">小齿轮</button><button role="tab">齿条</button><button role="tab">属性</button>
      <mark-box></mark-box>
    </div>
    <div class="page">
      <field-group class="motion" label="运动轴">
        <div class="row"><push-button class="pick" label="选取"><ui-icon name="pick"></ui-icon></push-button><text-field readonly label="运动轴" value="Connection_20.axis_1"></text-field></div>
      </field-group>
      <field-group class="body" label="主体">
        <div class="row">
          <div class="col">
            <field-group label="小齿轮"><text-field readonly cjk label="小齿轮" value="主体5"></text-field></field-group>
            <field-group label="托架"><text-field readonly cjk label="托架" value="主体1"></text-field></field-group>
          </div>
          <push-button class="swap" label="反向"><ui-icon name="swap"></ui-icon></push-button>
        </div>
      </field-group>
      <field-group class="pitch" label="节圆">
        <field-group class="dia" label="直径">
          <div class="row"><text-field label="直径" value="10"></text-field><text-field readonly label="单位" value="mm"></text-field><mark-box oval></mark-box></div>
        </field-group>
        <field-group class="loc" label="图标位置">
          <div class="row"><push-button class="pick" label="选取"><ui-icon name="pick"></ui-icon></push-button><text-field readonly label="图标位置"></text-field></div>
        </field-group>
      </field-group>
    </div>
    <footer><push-button class="ok">确定</push-button><push-button>应用</push-button><push-button>取消</push-button></footer>`;
  }
}

customElements.define('ui-icon', UiIcon);
customElements.define('ui-caret', UiCaret);
customElements.define('mark-box', MarkBox);
customElements.define('cad-window', CadWindow);
customElements.define('quick-bar', QuickBar);
customElements.define('ribbon-tabs', RibbonTabs);
customElements.define('ribbon-tab', RibbonTab);
customElements.define('ribbon-bar', RibbonBar);
customElements.define('ribbon-group', RibbonGroup);
customElements.define('ribbon-button', RibbonButton);
customElements.define('icon-column', IconColumn);
customElements.define('ribbon-sep', RibbonSep);
customElements.define('ribbon-caret', RibbonCaret);
customElements.define('side-panel', SidePanel);
customElements.define('tree-view', TreeView);
customElements.define('tree-item', TreeItem);
customElements.define('graphics-area', GraphicsArea);
customElements.define('view-toolbar', ViewToolbar);
customElements.define('forum-stamp', ForumStamp);
customElements.define('field-group', FieldGroup);
customElements.define('text-field', TextField);
customElements.define('push-button', PushButton);
customElements.define('gear-dialog', GearDialog);
</script>
</body>
</html>
